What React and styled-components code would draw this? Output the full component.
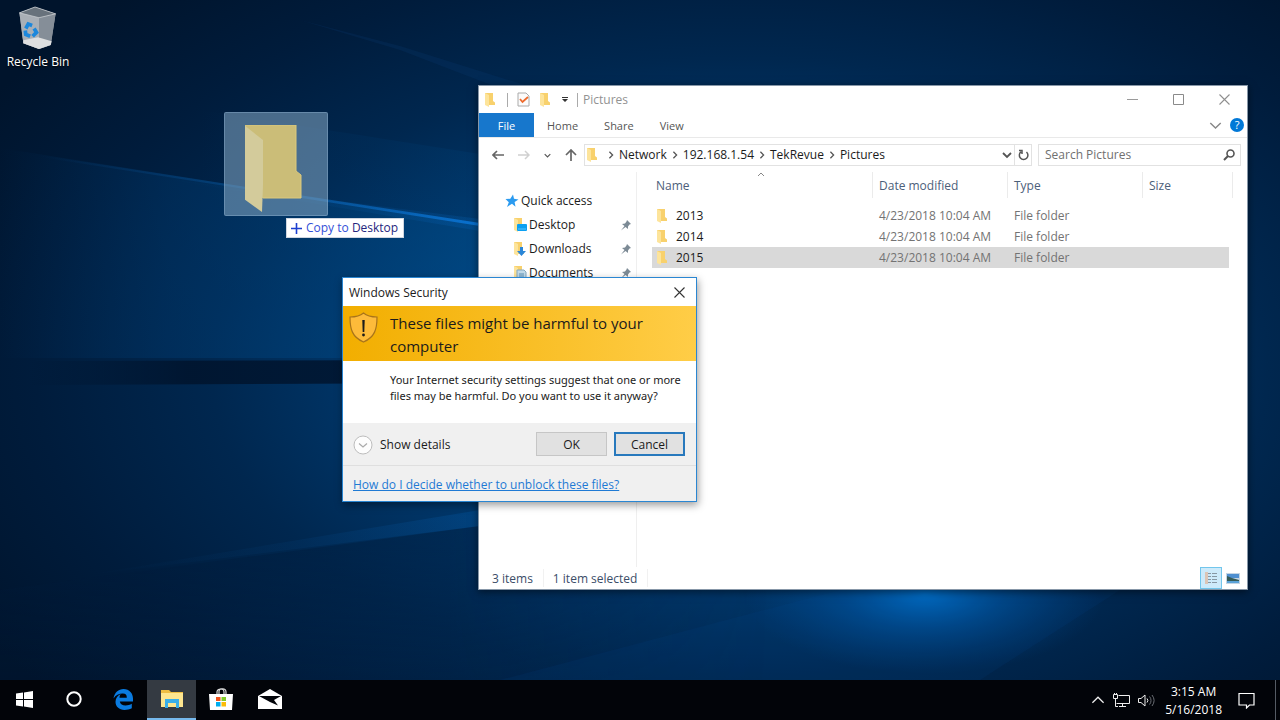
import React from "react";
import styled, { createGlobalStyle } from "styled-components";

const GlobalStyle = createGlobalStyle`
  * {
    box-sizing: border-box;
  }

  body {
    margin: 0;
    background: #00162f;
    font-family: "Open Sans", "Noto Sans", sans-serif;
    font-size: 12px;
    line-height: 16px;
    color: #1b1b1b;
  }

  button, input {
    font: inherit;
    color: inherit;
  }

  button {
    padding: 0;
    border: none;
    background: none;
  }

  svg {
    display: block;
    flex: none;
  }
`;

const Screen = styled.div`
  display: flex;
  flex-direction: column;
  min-height: 100vh;
`;

const Desktop = styled.main`
  position: relative;
  flex: 1;
  overflow: hidden;
`;

const WallpaperArt = styled.svg`
  position: absolute;
  inset: 0;
  width: 100%;
  height: 100%;
`;

const DesktopIcon = styled.button`
  position: absolute;
  top: 6px;
  left: 0;
  width: 76px;
  display: flex;
  flex-direction: column;
  align-items: center;
  gap: 4px;
  color: #fff;
  text-shadow: 0 1px 2px #000;
`;

const DragGhost = styled.div`
  position: absolute;
  top: 112px;
  left: 224px;
  padding: 12px 20px 4px;
  width: 104px;
  height: 104px;
  border: 1px solid rgba(150, 185, 215, 0.4);
  border-radius: 2px;
  background: rgba(130, 165, 195, 0.56);
`;

const DropHint = styled.div`
  position: absolute;
  top: 218px;
  left: 286px;
  display: flex;
  align-items: center;
  gap: 4px;
  height: 20px;
  padding: 0 5px 0 4px;
  border: 1px solid #cfd6e0;
  background: #fff;
  color: #3450d8;
  white-space: pre;

  b {
    font-weight: 400;
    color: #26267e;
  }
`;

/* Explorer */

const Window = styled.section`
  position: absolute;
  top: 85px;
  left: 478px;
  width: 770px;
  height: 505px;
  display: flex;
  flex-direction: column;
  border: 1px solid #8797a8;
  background: #fff;
  box-shadow: 0 2px 8px rgba(0, 0, 0, 0.5);
`;

const TitleBar = styled.header`
  display: flex;
  align-items: center;
  height: 27px;
  padding-left: 5px;
  color: #929292;
`;

const QuickTools = styled.div`
  display: flex;
  align-items: center;
  gap: 9px;
  margin-right: 5px;
`;

const Separator = styled.span`
  width: 1px;
  height: 14px;
  background: #aaa;
`;

const Caption = styled.div`
  display: flex;
  margin-left: auto;
`;

const CaptionButton = styled.button`
  display: grid;
  place-items: center;
  width: 46px;
  height: 26px;
`;

const Ribbon = styled.nav`
  display: flex;
  align-items: center;
  height: 25px;
  border-bottom: 1px solid #e9e9e9;
  color: #555;
  font-size: 11px;
`;

const RibbonTab = styled.button`
  align-self: stretch;
  width: ${({ $file }) => ($file ? "55px" : "auto")};
  padding: 1px ${({ $file }) => ($file ? "0" : "13px")} 0;
  background: ${({ $file }) => ($file ? "#1777cc" : "none")};
  color: ${({ $file }) => ($file ? "#fff" : "inherit")};
`;

const RibbonEnd = styled.div`
  display: flex;
  align-items: center;
  gap: 8px;
  margin-left: auto;
  padding-right: 3px;
`;

const RoundButton = styled.button`
  display: grid;
  place-items: center;
  width: 14px;
  height: 14px;
  border-radius: 50%;
  background: #0078d7;
  color: #fff;
  font-size: 11px;
  line-height: 14px;
`;

const AddressRow = styled.div`
  display: flex;
  align-items: center;
  height: 34px;
  padding: 0 6px 0 13px;
`;

const NavButtons = styled.div`
  display: flex;
  align-items: center;
  width: 92px;
  gap: 14px;
`;

const AddressBox = styled.div`
  flex: 1;
  display: flex;
  align-items: center;
  height: 22px;
  padding-left: 1px;
  border: 1px solid #e2e2e2;
`;

const Crumbs = styled.ol`
  display: flex;
  flex: 1;
  margin: 0;
  padding: 0 0 0 7px;
  list-style: none;

  li {
    display: flex;
    align-items: center;
    gap: 4px;
    margin-right: 4px;
  }
`;

const RefreshButton = styled.button`
  display: grid;
  place-items: center;
  align-self: stretch;
  width: 17px;
  margin-left: 2px;
  border-left: 1px solid #e2e2e2;
`;

const SearchBox = styled.label`
  display: flex;
  align-items: center;
  width: 203px;
  height: 22px;
  margin-left: 6px;
  padding: 0 5px 0 6px;
  border: 1px solid #e2e2e2;

  input {
    flex: 1;
    min-width: 0;
    padding: 0;
    border: none;
    outline: none;
    background: none;
  }

  input::placeholder {
    color: #707070;
    opacity: 1;
  }
`;

const Panes = styled.div`
  flex: 1;
  display: flex;
  min-height: 0;
`;

const Sidebar = styled.nav`
  width: 158px;
  padding: 17px 5px 0 26px;
  border-right: 1px solid #efefef;
`;

const SideItem = styled.a`
  display: flex;
  align-items: center;
  gap: 2px;
  height: 24px;
  padding-left: ${({ $child }) => ($child ? "8px" : "0")};
  color: inherit;
  text-decoration: none;

  svg:nth-of-type(2) {
    margin-left: auto;
  }
`;

const FilePane = styled.div`
  position: relative;
  flex: 1;
  padding: 0 14px 0 15px;
`;

const SortMark = styled.svg`
  position: absolute;
  top: 0;
  left: 120px;
`;

const FileTable = styled.table`
  width: 100%;
  table-layout: fixed;
  border-collapse: separate;
  border-spacing: 0;

  th, td {
    padding: 0 0 0 6px;
    font-weight: 400;
    text-align: left;
  }

  th {
    height: 26px;
    padding-top: 2px;
    border-right: 1px solid #ebebeb;
    color: #4c607a;
  }

  th:first-child, td:first-child {
    padding-left: 4px;
  }

  thead::after {
    content: "";
    display: block;
    height: 7px;
  }
`;

const FileRow = styled.tr`
  height: 21px;
  color: #737373;

  td {
    background: linear-gradient(${({ $selected }) => ($selected ? "#d9d9d9, #d9d9d9" : "#fff, #fff")}) no-repeat;
  }

  td:last-child {
    background-size: calc(100% - 4px) 100%;
  }
`;

const FileName = styled.span`
  display: flex;
  align-items: center;
  gap: 6px;
  color: #1b1b1b;
`;

const StatusBar = styled.footer`
  display: flex;
  align-items: center;
  height: 22px;
  padding: 0 3px 0 13px;
  color: #3b4d68;
`;

const StatusText = styled.span`
  padding: 2px 10px 0 0;
  margin-right: 9px;
  border-right: 1px solid #f1f1f1;
`;

const ViewButton = styled.button`
  display: grid;
  place-items: center;
  width: 22px;
  height: 22px;
  border: 1px solid ${({ $active }) => ($active ? "#72c6ec" : "transparent")};
  background: ${({ $active }) => ($active ? "#cdeafa" : "none")};
`;

/* Security prompt */

const Dialog = styled.section`
  position: absolute;
  top: 277px;
  left: 342px;
  width: 355px;
  border: 1px solid #2a86d2;
  background: #fff;
  box-shadow: 1px 3px 8px rgba(0, 0, 0, 0.4);
`;

const DialogTitle = styled.header`
  display: flex;
  align-items: center;
  justify-content: space-between;
  height: 28px;
  padding: 1px 11px 0 6px;
`;

const Banner = styled.div`
  display: flex;
  gap: 12px;
  height: 55px;
  padding: 6px 6px 0;
  background: linear-gradient(90deg, #f2ae00, #ffcd47);

  h1 {
    margin: 0;
    font-size: 15px;
    line-height: 23px;
    font-weight: 400;
  }
`;

const Message = styled.p`
  margin: 0;
  height: 62px;
  padding: 11px 6px 0 47px;
  font-family: "Noto Sans", sans-serif;
  font-size: 11px;
`;

const Actions = styled.div`
  display: flex;
  align-items: center;
  gap: 7px;
  height: 43px;
  padding: 0 11px 0 10px;
  border-bottom: 1px solid #dfdfdf;
  background: #f0f0f0;
`;

const DetailsButton = styled.button`
  display: flex;
  align-items: center;
  gap: 7px;
  margin-right: auto;
  padding-top: 1px;
`;

const PushButton = styled.button`
  width: 71px;
  height: 24px;
  padding-top: 1px;
  border: ${({ $focused }) => ($focused ? "2px solid #2879bd" : "1px solid #c6c6c6")};
  background: #e1e1e1;
`;

const DialogFooter = styled.div`
  height: 35px;
  padding: 11px 10px 0;
  background: #f0f0f0;

  a {
    color: #1f7ad4;
  }
`;

/* Taskbar */

const Taskbar = styled.footer`
  display: flex;
  height: 40px;
  background: #020409;
  color: #fff;
`;

const TaskButton = styled.button`
  display: grid;
  place-items: center;
  width: 49px;
  background: ${({ $active }) => ($active ? "#343a42" : "none")};
  border-bottom: 2px solid ${({ $active }) => ($active ? "#76b9ed" : "transparent")};
`;

const Tray = styled.div`
  display: flex;
  align-items: center;
  gap: 8px;
  margin-left: auto;
`;

const Clock = styled.time`
  padding: 2px 8px 0 2px;
  line-height: 18px;
  text-align: center;
`;

const ShowDesktop = styled.button`
  align-self: stretch;
  width: 5px;
  margin-left: 12px;
  border-left: 1px solid #555b64;
`;

const Wallpaper = () => (
  <WallpaperArt viewBox="0 0 1280 680" preserveAspectRatio="none" aria-hidden="true">
    <defs>
      <radialGradient id="base" gradientUnits="userSpaceOnUse" cx="0" cy="0" r="1" gradientTransform="translate(740 370) scale(880 520)">
        <stop offset="0" stopColor="#0061b3" />
        <stop offset="0.35" stopColor="#003c73" />
        <stop offset="0.6" stopColor="#00274f" />
        <stop offset="0.8" stopColor="#001c3c" />
        <stop offset="1" stopColor="#00142c" />
      </radialGradient>
      <radialGradient id="glow">
        <stop offset="0" stopColor="#0070ca" stopOpacity="0.95" />
        <stop offset="0.45" stopColor="#005cad" stopOpacity="0.5" />
        <stop offset="1" stopColor="#004a91" stopOpacity="0" />
      </radialGradient>
      <linearGradient id="beam">
        <stop offset="0" stopColor="#0a5eab" stopOpacity="0" />
        <stop offset="0.5" stopColor="#0a5eab" stopOpacity="0.4" />
        <stop offset="1" stopColor="#0a76d8" stopOpacity="0.9" />
      </linearGradient>
      <linearGradient id="wash">
        <stop offset="0" stopColor="#004481" stopOpacity="0" />
        <stop offset="0.35" stopColor="#00437f" stopOpacity="0.3" />
        <stop offset="1" stopColor="#00508f" stopOpacity="0.5" />
      </linearGradient>
      <linearGradient id="shade">
        <stop offset="0" stopColor="#001128" stopOpacity="0" />
        <stop offset="0.35" stopColor="#001128" stopOpacity="0.75" />
        <stop offset="1" stopColor="#001733" stopOpacity="0.95" />
      </linearGradient>
      <linearGradient id="low" x1="0" y1="0" x2="0" y2="1">
        <stop offset="0" stopColor="#001b3a" stopOpacity="0.6" />
        <stop offset="1" stopColor="#001b3a" stopOpacity="0.1" />
      </linearGradient>
      <linearGradient id="lowEdge">
        <stop offset="0" stopColor="#fff" />
        <stop offset="0.35" stopColor="#fff" />
        <stop offset="0.6" stopColor="#000" />
      </linearGradient>
      <mask id="lowMask">
        <rect width="1280" height="680" fill="url(#lowEdge)" />
      </mask>
    </defs>
    <rect width="1280" height="680" fill="url(#base)" />
    <path d="M0 148 480 224V358H0Z" fill="url(#wash)" />
    <path d="M200 110 480 154V224L200 179Z" fill="url(#wash)" opacity="0.3" />
    <path d="M300 20 400 46 560 96H520L400 50Z" fill="#0a4580" opacity="0.18" />
    <path d="M40 155 480 223V226L40 157Z" fill="url(#beam)" />
    <path d="M160 178 480 219V231Z" fill="url(#beam)" opacity="0.2" />
    <path d="M30 361 480 360V383L30 385Z" fill="url(#shade)" />
    <path d="M0 590 480 526 1280 430V680H0Z" fill="url(#low)" mask="url(#lowMask)" />
    <path d="M80 576 480 510V526Z" fill="url(#beam)" opacity="0.2" />
    <ellipse cx="925" cy="594" rx="180" ry="80" fill="url(#glow)" />
    <path d="M840 590 500 680H980L1120 590Z" fill="#00539c" opacity="0.1" />
  </WallpaperArt>
);

const RecycleBinIcon = () => (
  <svg width="40" height="44" viewBox="0 0 40 45">
    <path d="M1 7 17 1 38 8 33 40 21 44 5 38Z" fill="#9aa1a9" />
    <path d="M1 7 21 12 21 44 5 38Z" fill="#a9afb6" />
    <path d="M21 12 38 8 33 40 21 44Z" fill="#858e98" />
    <path d="M1 7 17 1 38 8 21 12Z" fill="#68727c" stroke="#c9cdd1" strokeWidth="0.800" />
    <path d="M5 35 20 32 34 36 33 40 21 44 5 38Z" fill="#dedfe0" />
    <g fill="none" stroke="#1c87dc" strokeWidth="3.800">
      <path d="M7.500 23 10 18.500 14 20" />
      <path d="M16 23 18.500 27 14.500 31" />
      <path d="M12 31 7.500 29 7 25" />
    </g>
  </svg>
);

const GhostFolder = () => (
  <svg width="60" height="88" viewBox="0 0 60 88">
    <path d="M-1 0H51V46L56 50V73H17V86L-1 73Z" fill="#cbbd78" />
    <path d="M-1 0 18 15V60L17 87-1 74Z" fill="#d3cb9b" />
    <path d="M-1 0H51V46L56 50V73H18" fill="none" stroke="#dcc97c" />
  </svg>
);

const overlays = {
  desktop: (
    <>
      <rect x="4" y="7" width="10" height="7" rx="1" fill="#0aa0f2" />
      <path d="M5 12h8" stroke="#58c3fb" />
    </>
  ),
  downloads: <path d="M7 6h3v4h3l-4.500 5L4 10h3z" fill="#2a86d8" />,
  documents: (
    <>
      <path d="M4 5h7l2 2v8H4z" fill="#c3dbea" stroke="#87a9bf" />
      <path d="M6 9h5M6 11h5" stroke="#5a93ba" />
    </>
  ),
};

const FolderIcon = ({ overlay }) => (
  <svg width="14" height="16" viewBox="0 0 14 16">
    <path d="M1 1h8v8l2 1.500V13H1z" fill="#f8d16d" />
    <path d="M1 1l4 2v12l-4-2z" fill="#fde49b" />
    {overlays[overlay]}
  </svg>
);

const Chevron = ({ dir = "down", size = 8, color = "#555", weight = 1.6 }) => {
  const shapes = {
    down: "M1 3 5 7 9 3",
    up: "M1 7 5 3 9 7",
    right: "M3 1 7 5 3 9",
  };
  return (
    <svg width={size} height={size} viewBox="0 0 10 10" fill="none" stroke={color} strokeWidth={weight}>
      <path d={shapes[dir]} />
    </svg>
  );
};

const Arrow = ({ up, color = "#666" }) => (
  <svg width="12" height="12" viewBox="0 0 12 12" fill="none" stroke={color} strokeWidth="1.700">
    <path d={up ? "M6 12V1M1 6 6 1 11 6" : "M12 6H1M5 2 1 6 5 10"} />
  </svg>
);

const PinIcon = () => (
  <svg width="10" height="12" viewBox="0 0 10 12" fill="#7c8a95">
    <path d="M6 1 10 5 8.500 5.500 7 7.500 7 10 4.500 8 0 11.500 3.500 7 1 5 4 4.500 5.500 2.500Z" />
  </svg>
);

const CloseIcon = ({ color }) => (
  <svg width="11" height="11" viewBox="0 0 11 11" stroke={color} strokeWidth="1.100">
    <path d="M0.500 0.500 10.500 10.500M10.500 0.500 0.500 10.500" />
  </svg>
);

const ShieldIcon = () => (
  <svg width="29" height="31" viewBox="0 0 29 31">
    <path d="M14.500 1C11 4 6 5 1 5C1 17 3 25 14.500 30C26 25 28 17 28 5C23 5 18 4 14.500 1Z" fill="#fdbb3a" stroke="#a8741b" strokeWidth="1.200" />
    <path d="M13.300 8H15.700L15.300 20H13.700Z" fill="#1b1b1b" />
    <circle cx="14.500" cy="23" r="1.400" fill="#1b1b1b" />
  </svg>
);

const places = [
  { name: "Desktop", overlay: "desktop" },
  { name: "Downloads", overlay: "downloads" },
  { name: "Documents", overlay: "documents" },
];

const crumbs = ["Network", "192.168.1.54", "TekRevue", "Pictures"];

const files = [
  { name: "2013", modified: "4/23/2018 10:04 AM", type: "File folder" },
  { name: "2014", modified: "4/23/2018 10:04 AM", type: "File folder" },
  { name: "2015", modified: "4/23/2018 10:04 AM", type: "File folder", selected: true },
];

const Explorer = () => (
  <Window aria-label="Pictures">
    <TitleBar>
      <QuickTools>
        <FolderIcon />
        <Separator />
        <svg width="13" height="15" viewBox="0 0 13 15">
          <path d="M1 1H9L12 4V14H1Z" fill="#fbfbfb" stroke="#aaa" />
          <path d="M3 7 5.500 10 11 5" fill="none" stroke="#ee6b2d" strokeWidth="1.800" />
        </svg>
        <FolderIcon />
        <svg width="6" height="6" viewBox="0 0 6 6" fill="#333">
          <path d="M0 0H6V1H0ZM0 2H6L3 5Z" />
        </svg>
        <Separator />
      </QuickTools>
      Pictures
      <Caption>
        <CaptionButton aria-label="Minimize">
          <svg width="11" height="11" viewBox="0 0 11 11" stroke="#9a9a9a"><path d="M0 5.500H11" /></svg>
        </CaptionButton>
        <CaptionButton aria-label="Maximize">
          <svg width="11" height="11" viewBox="0 0 11 11" fill="none" stroke="#8a8a8a"><path d="M0.500 0.500H10.500V10.500H0.500Z" /></svg>
        </CaptionButton>
        <CaptionButton aria-label="Close"><CloseIcon color="#8f8f8f" /></CaptionButton>
      </Caption>
    </TitleBar>
    <Ribbon>
      <RibbonTab $file>File</RibbonTab>
      <RibbonTab>Home</RibbonTab>
      <RibbonTab>Share</RibbonTab>
      <RibbonTab>View</RibbonTab>
      <RibbonEnd>
        <button aria-label="Expand the ribbon"><Chevron size={13} color="#888" weight={1.1} /></button>
        <RoundButton aria-label="Help">?</RoundButton>
      </RibbonEnd>
    </Ribbon>
    <AddressRow>
      <NavButtons>
        <button aria-label="Back"><Arrow /></button>
        <button aria-label="Forward">
          <svg width="12" height="12" viewBox="0 0 12 12" fill="none" stroke="#d0d0d0" strokeWidth="1.500"><path d="M0 6H11M7 2 11 6 7 10" /></svg>
        </button>
        <button aria-label="Recent locations"><Chevron size={7} /></button>
        <button aria-label="Up"><Arrow up /></button>
      </NavButtons>
      <AddressBox>
        <FolderIcon />
        <Crumbs>
          {crumbs.map((crumb) => (
            <li key={crumb}>
              <Chevron dir="right" />
              {crumb}
            </li>
          ))}
        </Crumbs>
        <button aria-label="Previous locations"><Chevron size={10} weight={1.8} /></button>
        <RefreshButton aria-label="Refresh">
          <svg width="11" height="12" viewBox="0 0 11 12" fill="none" stroke="#555" strokeWidth="1.500">
            <path d="M8.500 3A4.300 4.300 0 1 1 3 2.800M1 1.500H4V5" />
          </svg>
        </RefreshButton>
      </AddressBox>
      <SearchBox>
        <input type="text" placeholder="Search Pictures" aria-label="Search Pictures" />
        <svg width="12" height="12" viewBox="0 0 12 12" fill="none" stroke="#555" strokeWidth="1.600">
          <circle cx="7.500" cy="4.500" r="3.500" />
          <path d="M5 7 1 11" strokeWidth="2" />
        </svg>
      </SearchBox>
    </AddressRow>
    <Panes>
      <Sidebar>
        <SideItem href="#quick-access">
          <svg width="14" height="14" viewBox="0 0 14 14" fill="#2b9bf0">
            <path d="M8 0.500 9 4.800 13.500 5.500 9.600 8 10.500 12.800 7 9.800 2 13 3.800 8.300 0.500 5 5.300 4.800Z" />
          </svg>
          Quick access
        </SideItem>
        {places.map(({ name, overlay }) => (
          <SideItem key={name} href={`#${overlay}`} $child>
            <FolderIcon overlay={overlay} />
            {name}
            <PinIcon />
          </SideItem>
        ))}
      </Sidebar>
      <FilePane>
        <SortMark width="8" height="5" viewBox="0 0 8 5" fill="none" stroke="#888">
          <path d="M1 4 4 1 7 4" />
        </SortMark>
        <FileTable>
          <colgroup>
            <col />
            <col width="135" />
            <col width="135" />
            <col width="90" />
          </colgroup>
          <thead>
            <tr>
              <th>Name</th>
              <th>Date modified</th>
              <th>Type</th>
              <th>Size</th>
            </tr>
          </thead>
          <tbody>
            {files.map(({ name, modified, type, selected }) => (
              <FileRow key={name} $selected={selected}>
                <td><FileName><FolderIcon />{name}</FileName></td>
                <td>{modified}</td>
                <td>{type}</td>
                <td />
              </FileRow>
            ))}
          </tbody>
        </FileTable>
      </FilePane>
    </Panes>
    <StatusBar>
      <StatusText>3 items</StatusText>
      <StatusText>1 item selected</StatusText>
      <Caption>
        <ViewButton $active aria-label="Details view">
          <svg width="14" height="14" viewBox="0 0 14 14">
            <path d="M1 1h3v12H1z" fill="#dcc5b6" />
            <path d="M4 2.500h3M8 2.500h5M4 5.500h3M8 5.500h5M4 8.500h3M8 8.500h5M4 11.500h3M8 11.500h5" stroke="#8797a3" />
          </svg>
        </ViewButton>
        <ViewButton aria-label="Large icons view">
          <svg width="14" height="11" viewBox="0 0 14 11">
            <path d="M0 0H14V11H0Z" fill="#c4d5e4" />
            <path d="M1 1H13V5H1Z" fill="#4e8fd0" />
            <path d="M1 3 6 5 13 7V9H1Z" fill="#355b57" />
            <path d="M1 8H13V10H1Z" fill="#5aa2d8" />
          </svg>
        </ViewButton>
      </Caption>
    </StatusBar>
  </Window>
);

const SecurityDialog = () => (
  <Dialog role="dialog" aria-labelledby="dialog-title">
    <DialogTitle>
      <span id="dialog-title">Windows Security</span>
      <button aria-label="Close"><CloseIcon color="#333" /></button>
    </DialogTitle>
    <Banner>
      <ShieldIcon />
      <h1>These files might be harmful to your computer</h1>
    </Banner>
    <Message>
      Your Internet security settings suggest that one or more files may be harmful. Do you want to use it anyway?
    </Message>
    <Actions>
      <DetailsButton>
        <svg width="20" height="20" viewBox="0 0 20 20">
          <circle cx="10" cy="10" r="9" fill="#fdfdfd" stroke="#bdbdbd" />
          <path d="M6 8.500 10 12 14 8.500" fill="none" stroke="#aaa" strokeWidth="1.200" />
        </svg>
        Show details
      </DetailsButton>
      <PushButton>OK</PushButton>
      <PushButton $focused>Cancel</PushButton>
    </Actions>
    <DialogFooter>
      <a href="#unblock">How do I decide whether to unblock these files?</a>
    </DialogFooter>
  </Dialog>
);

const App = () => (
  <Screen>
    <GlobalStyle />
    <Desktop>
      <Wallpaper />
      <DesktopIcon>
        <RecycleBinIcon />
        Recycle Bin
      </DesktopIcon>
      <Explorer />
      <DragGhost><GhostFolder /></DragGhost>
      <DropHint>
        <svg width="11" height="11" viewBox="0 0 11 11" stroke="#1c3fd0" strokeWidth="1.600"><path d="M5.500 0V11M0 5.500H11" /></svg>
        <span>Copy to <b>Desktop</b></span>
      </DropHint>
      <SecurityDialog />
    </Desktop>
    <Taskbar>
      <TaskButton aria-label="Start">
        <svg width="17" height="17" viewBox="0 0 17 17" fill="#fff">
          <path d="M0 2.500 7 1.500V8H0ZM8 1.400 17 0V8H8ZM0 9H7V15.500L0 14.500ZM8 9H17V17L8 15.600Z" />
        </svg>
      </TaskButton>
      <TaskButton aria-label="Cortana">
        <svg width="16" height="16" viewBox="0 0 16 16" fill="none" stroke="#fff" strokeWidth="2"><circle cx="8" cy="8" r="6.700" /></svg>
      </TaskButton>
      <TaskButton aria-label="Edge">
        <svg width="20" height="21" viewBox="0 0 20 21">
          <path d="M0.500 9.500C1.500 3.500 5.500 0 10.500 0C16.500 0 20 4.500 20 9.500V12.500H6.800C7.200 15.300 9.500 16.500 12.500 16.500C15 16.500 17 15.900 18.800 14.800V19.300C16.500 20.500 14.200 21 11.500 21C6 21 2.500 17.500 2.500 12.800C2.500 9 4.800 6.500 7.800 5C7 6 6.600 7 6.500 8.700H13.800C13.800 6 12.700 4.600 9.800 4.600C6 4.600 2.500 6.500 0.500 9.500Z" fill="#0a7be0" />
        </svg>
      </TaskButton>
      <TaskButton $active aria-label="File Explorer">
        <svg width="22" height="18" viewBox="0 0 22 18">
          <path d="M0 0H8L10 2H22V6H0Z" fill="#eebd43" />
          <path d="M0 3H22V17H0Z" fill="#fde58f" />
          <path d="M4 9H18V18H15V13H7V18H4Z" fill="#3aaee8" />
        </svg>
      </TaskButton>
      <TaskButton aria-label="Store">
        <svg width="24" height="22" viewBox="0 0 24 22">
          <path d="M8 7V4C8 0 15 0 15 4V7M10 7V3.500C10 -0.500 17 0 17 4V7" fill="none" stroke="#ddd" strokeWidth="1.200" />
          <path d="M0 6H24L23 22H1Z" fill="#fff" />
          <path d="M7 9H11.500V13H7Z" fill="#f1511b" />
          <path d="M12.500 9H17V13H12.500Z" fill="#80cc28" />
          <path d="M7 14H11.500V18.500H7Z" fill="#00adef" />
          <path d="M12.500 14H17V18.500H12.500Z" fill="#fbbc09" />
        </svg>
      </TaskButton>
      <TaskButton aria-label="Mail">
        <svg width="24" height="20" viewBox="0 0 24 20">
          <path d="M0 7 12 0 24 7V20H0Z" fill="#fff" />
          <path d="M1 7H23L16 11 20 16.500 12 13Z" fill="#020409" />
        </svg>
      </TaskButton>
      <Tray>
        <button aria-label="Show hidden icons"><Chevron dir="up" size={14} color="#eee" weight={0.9} /></button>
        <svg width="17" height="15" viewBox="0 0 17 15" fill="none" stroke="#eee">
          <path d="M5.500 2.500H16.500V10.500H3.500M9.500 10.500V13.500M6 13.500H13M0.500 1.500H4.500V5.500H0.500ZM2.500 5.500V13.500H5M1.500 0V2M3.500 0V2" />
        </svg>
        <svg width="17" height="15" viewBox="0 0 17 15" fill="none" stroke="#eee">
          <path d="M0.500 5.500H3L7 2V13L3 9.500H0.500Z" />
          <path d="M9 5.500A3 3 0 0 1 9 9.500" />
          <path d="M11.500 3.500A6 6 0 0 1 11.500 11.500M14 2A9 9 0 0 1 14 13" stroke="#6a6e74" />
        </svg>
        <Clock>3:15 AM<br />5/16/2018</Clock>
        <button aria-label="Notifications">
          <svg width="17" height="17" viewBox="0 0 17 17" fill="none" stroke="#fff" strokeWidth="1.200">
            <path d="M1 1.500H16V13H11.500L8.500 16L8.500 13H1Z" />
          </svg>
        </button>
        <ShowDesktop aria-label="Show desktop" />
      </Tray>
    </Taskbar>
  </Screen>
);

export default App;
